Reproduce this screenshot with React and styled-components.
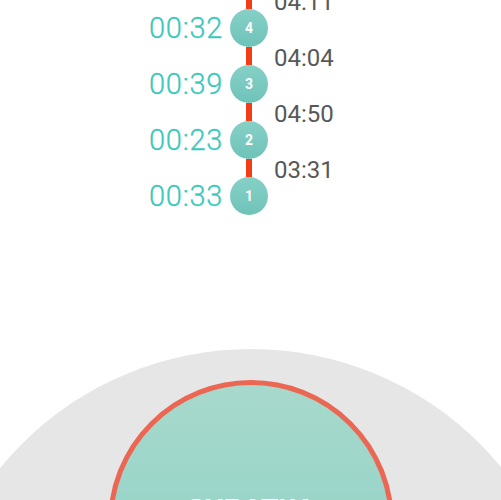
import React from "react";
import styled, { createGlobalStyle } from "styled-components";

const GlobalStyle = createGlobalStyle`
  html, body {
    margin: 0;
    padding: 0;
    background: #ffffff;
  }
`;

const Screen = styled.div`
  width: 501px;
  height: 500px;
  overflow: hidden;
  display: flex;
  flex-direction: column;
  font-family: Roboto, "Liberation Sans", sans-serif;
`;

const Timeline = styled.div`
  margin-top: -9px;
  display: grid;
  grid-template-columns: 223px 38px 1fr;
  column-gap: 7px;
`;

const StartTime = styled.div`
  text-align: right;
  font-size: 29px;
  font-weight: 300;
  line-height: 38px;
  letter-spacing: 0.7px;
  color: #3ac8bc;
  -webkit-text-stroke: 0.3px #3ac8bc;
`;

const Node = styled.div`
  width: 38px;
  height: 38px;
  border-radius: 50%;
  background: linear-gradient(180deg, #86d0c7 0%, #6fc3b9 100%);
  color: #ffffff;
  font-size: 14px;
  font-weight: 700;
  display: flex;
  align-items: center;
  justify-content: center;
`;

const Segment = styled.div`
  height: 18px;
  display: flex;
  justify-content: center;
  margin-left: -1px;

  &::before {
    content: "";
    width: 6px;
    height: 100%;
    background: #f23e17;
  }
`;

const Interval = styled.div`
  margin-left: -1px;
  font-size: 24px;
  font-weight: 400;
  line-height: 18px;
  padding-top: 2px;
  height: 16px;
  color: #585858;
  white-space: nowrap;
`;

const Empty = styled.div``;

const Dock = styled.div`
  margin-top: 134px;
  align-self: center;
  flex-shrink: 0;
  width: 648px;
  height: 648px;
  border-radius: 50%;
  background: #e6e6e6;
  display: flex;
  justify-content: center;
`;

const StartButton = styled.button`
  margin-top: 31px;
  width: 286px;
  height: 286px;
  flex-shrink: 0;
  border-radius: 50%;
  border: 5px solid #ec6753;
  background: linear-gradient(180deg, #a7d9cc 0%, #88d0c4 100%);
  color: #ffffff;
  font-family: "Liberation Sans", Arial, sans-serif;
  font-size: 28px;
  font-weight: 700;
  line-height: 1;
  padding: 110px 0 0;
  display: flex;
  justify-content: center;
  align-items: flex-start;
  box-sizing: border-box;
`;

const contractions = [
  { n: 4, duration: "00:32", interval: "04:11" },
  { n: 3, duration: "00:39", interval: "04:04" },
  { n: 2, duration: "00:23", interval: "04:50" },
  { n: 1, duration: "00:33", interval: "03:31" },
];

export default function App() {
  return (
    <>
      <GlobalStyle />
      <Screen>
        <Timeline>
          {contractions.map((c) => (
            <React.Fragment key={c.n}>
              <Empty />
              <Segment />
              <Interval>{c.interval}</Interval>
              <StartTime>{c.duration}</StartTime>
              <Node>{c.n}</Node>
              <Empty />
            </React.Fragment>
          ))}
        </Timeline>
        <Dock>
          <StartButton>СХВАТКА</StartButton>
        </Dock>
      </Screen>
    </>
  );
}
